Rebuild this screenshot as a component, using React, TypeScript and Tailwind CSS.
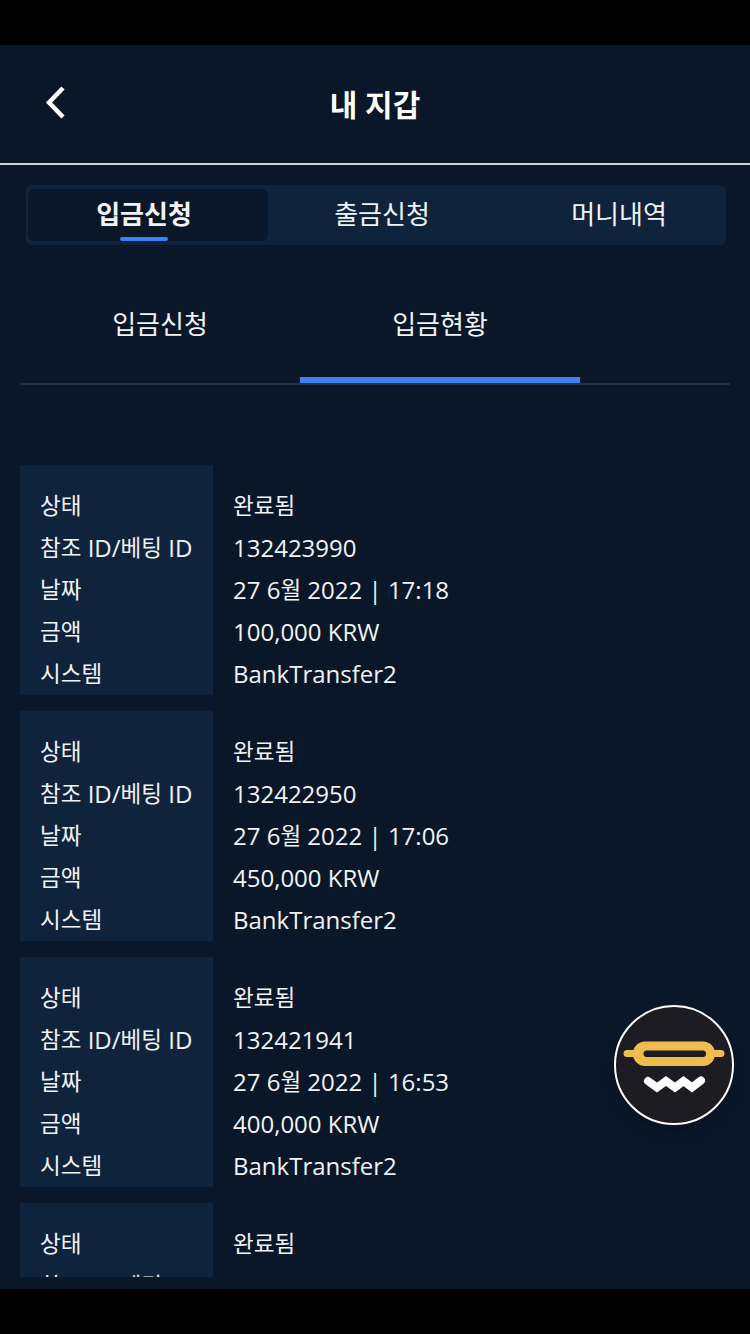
import type { ReactNode } from "react"

const font = { fontFamily: '"Open Sans", "Noto Sans CJK KR", sans-serif' }

interface Deposit {
    refId: string
    time: string
    amount: string
}

const deposits: Deposit[] = [
    { refId: '132423990', time: '17:18', amount: '100,000 KRW' },
    { refId: '132422950', time: '17:06', amount: '450,000 KRW' },
    { refId: '132421941', time: '16:53', amount: '400,000 KRW' },
    { refId: '132420877', time: '16:40', amount: '300,000 KRW' },
]

// hangul runs a bit smaller than the latin text
function Ko({ children }: { children: ReactNode }) {
    return <span className="align-[1px] text-[22.5px]">{children}</span>
}

function Row({ children }: { children: ReactNode }) {
    return <div className="h-[42px] leading-[42px] whitespace-nowrap">{children}</div>
}

function DepositCard({ deposit }: { deposit: Deposit }) {
    return (
        <div className="flex h-[230px] shrink-0">
            <div className="w-[193px] shrink-0 bg-[#10233d] pl-5 pt-5">
                <Row><Ko>상태</Ko></Row>
                <Row><Ko>참조</Ko> ID/<Ko>베팅</Ko> ID</Row>
                <Row><Ko>날짜</Ko></Row>
                <Row><Ko>금액</Ko></Row>
                <Row><Ko>시스템</Ko></Row>
            </div>
            <div className="pl-5 pt-5">
                <Row><Ko>완료됨</Ko></Row>
                <Row>{deposit.refId}</Row>
                <Row>27 6<Ko>월</Ko> 2022 | {deposit.time}</Row>
                <Row>{deposit.amount}</Row>
                <Row>BankTransfer2</Row>
            </div>
        </div>
    )
}

function ChatLogo() {
    return (
        <svg width="120" height="120" viewBox="0 0 120 120" className="block">
            <circle cx="60" cy="60" r="59" fill="#1c1c22" stroke="#ffffff" strokeWidth="2" />
            <rect x="9.5" y="45" width="101" height="7" rx="3.5" fill="#efbd4d" />
            <rect x="19" y="36.5" width="82" height="24.5" rx="12" fill="#efbd4d" />
            <rect x="29.5" y="45.5" width="62.5" height="6.5" rx="3.2" fill="#1c1c22" />
            <path d="M34 76 L43 82.5 L52 76 L61 82.5 L69.5 76 L78 82.5 L87 75.5" fill="none" stroke="#ffffff" strokeWidth="8" strokeLinejoin="miter" strokeLinecap="round" />
        </svg>
    )
}

export default function App() {
    return (
        <div className="relative flex h-[1334px] w-[750px] flex-col overflow-hidden bg-black text-white" style={font}>
            <div className="mt-[45px] flex h-[1244px] flex-col bg-[#0a1728]">
                {/* Header */}
                <div className="relative flex h-[120px] shrink-0 items-center justify-center border-b-2 border-[#d4d4d4]">
                    <svg width="24" height="36" viewBox="0 0 24 36" className="absolute left-[43px] top-[40px]">
                        <path d="M20 3 L6 17.5 L20 32" fill="none" stroke="#ffffff" strokeWidth="4.5" />
                    </svg>
                    <span className="text-[30px] font-bold">내 지갑</span>
                </div>

                {/* Main tabs */}
                <div className="ml-[26px] mt-5 flex h-[60px] w-[700px] shrink-0 rounded-md bg-[#10233d] px-[2px] py-1 text-[26px] text-[#f1f3f5]">
                    <div className="relative flex w-[240px] items-center justify-center rounded-md bg-[#0a1728] pb-[2px] pr-2 font-bold">
                        입금신청
                        <div className="absolute bottom-0 left-[92px] h-1 w-12 rounded-sm bg-[#3b82f6]" />
                    </div>
                    <div className="flex w-[228px] items-center justify-center pb-[2px]">출금신청</div>
                    <div className="flex flex-1 items-center justify-center pb-[2px] pl-[18px]">머니내역</div>
                </div>

                {/* Sub tabs */}
                <div className="mx-5 mt-[38px] flex h-[102px] shrink-0 border-b-2 border-[#232f3f] text-[26px] text-[#f1f3f5]">
                    <div className="flex w-[280px] items-center justify-center pb-[18px]">입금신청</div>
                    <div className="flex w-[280px] items-center justify-center border-b-[6px] border-[#3b82f6] pb-3">입금현황</div>
                </div>

                {/* Deposit list */}
                <div className="mx-5 mt-20 flex h-[812px] flex-col gap-4 overflow-hidden text-[24px] text-[#f1f3f5]">
                    {deposits.map((deposit) => (
                        <DepositCard key={deposit.refId} deposit={deposit} />
                    ))}
                </div>
            </div>

            {/* Floating chat button */}
            <div className="absolute left-[614px] top-[1005px] rounded-full shadow-lg">
                <ChatLogo />
            </div>
        </div>
    )
}
